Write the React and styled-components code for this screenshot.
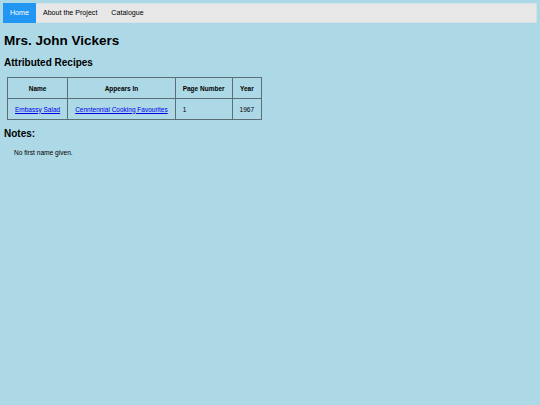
import React from 'react';
import styled, { createGlobalStyle } from 'styled-components';

const GlobalStyle = createGlobalStyle`
    html, body {
        margin: 0;
        padding: 0;
        background: #add8e6;
        font-family: "Liberation Sans", Arial, sans-serif;
        color: #000;
    }
    body {
        min-height: 405px;
    }
`

const Page = styled.div`
    padding: 3px 3px 0 4px;
`

const NavBar = styled.ul`
    list-style: none;
    margin: 0 0 0 -1px;
    padding: 0;
    display: flex;
    height: 20px;
    background: #e7e7e7;
    border: 1px solid #d3e3e8;
    box-sizing: border-box;
`

const NavItem = styled.li`
    display: flex;
`

const NavLink = styled.a`
    display: flex;
    align-items: center;
    padding: 0 7px;
    font-size: 7.1px;
    text-decoration: none;
    color: ${p => p.active ? '#fff' : '#000'};
    background: ${p => p.active ? '#2196f3' : 'transparent'};
    margin: -1px 0 -1px ${p => p.active ? '-1px' : '0'};
`

const Title = styled.h1`
    font-size: 13.5px;
    margin: 9px 0 0;
    line-height: 18px;
`

const SubTitle = styled.h2`
    font-size: 10px;
    margin: 6px 0 0;
    line-height: 14px;
`

const Table = styled.table`
    border-collapse: collapse;
    margin: 7px 0 0 3px;
    font-size: 6.5px;
`

const Th = styled.th`
    border: 1px solid #5b6f76;
    height: 20px;
    padding: 0 7px;
    font-weight: bold;
    text-align: center;
`

const Td = styled.td`
    border: 1px solid #5b6f76;
    height: 20px;
    padding: 0 7px;
    text-align: left;
`

const Link = styled.a`
    color: #0000ee;
    text-decoration: underline;
`

const NotesTitle = styled.h3`
    font-size: 10px;
    margin: 7px 0 0;
    line-height: 14px;
`

const Note = styled.p`
    font-size: 6.6px;
    margin: 8px 0 0 10px;
`

const App = () => {
    return (
        <>
            <GlobalStyle />
            <Page>
                <NavBar>
                    <NavItem><NavLink active href="#">Home</NavLink></NavItem>
                    <NavItem><NavLink href="#">About the Project</NavLink></NavItem>
                    <NavItem><NavLink href="#">Catalogue</NavLink></NavItem>
                </NavBar>
                <Title>Mrs. John Vickers</Title>
                <SubTitle>Attributed Recipes</SubTitle>
                <Table>
                    <thead>
                        <tr>
                            <Th>Name</Th>
                            <Th>Appears In</Th>
                            <Th>Page Number</Th>
                            <Th>Year</Th>
                        </tr>
                    </thead>
                    <tbody>
                        <tr>
                            <Td><Link href="#">Embassy Salad</Link></Td>
                            <Td><Link href="#">Cenntennial Cooking Favourites</Link></Td>
                            <Td>1</Td>
                            <Td>1967</Td>
                        </tr>
                    </tbody>
                </Table>
                <NotesTitle>Notes:</NotesTitle>
                <Note>No first name given.</Note>
            </Page>
        </>
    )
}

export default App;
